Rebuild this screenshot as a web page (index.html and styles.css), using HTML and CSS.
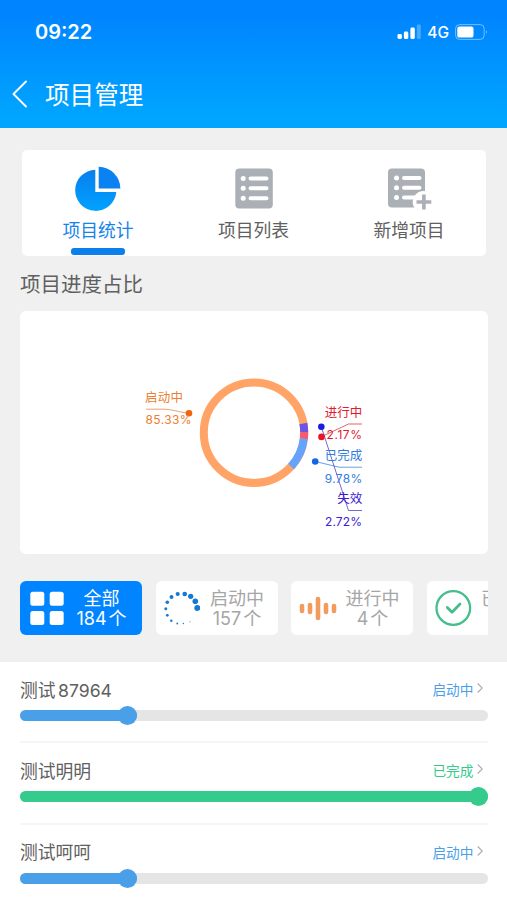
FILE: index.html
```html
<!DOCTYPE html>
<html lang="zh-CN">
<head>
<meta charset="utf-8">
<title>项目管理</title>
<link rel="stylesheet" href="styles.css">
</head>
<body>
<header class="header">
  <div class="status">
    <span class="time">09:22</span>
    <div class="indicators">
      <svg class="signal" width="24" height="16" viewBox="0 0 24 16" fill="#fff"><rect x="0.500" y="10" width="4.4" height="5" rx="1.4"/><rect x="6.900" y="7.5" width="4.4" height="7.5" rx="1.4"/><rect x="13.400" y="3.5" width="4.4" height="11.5" rx="1.4"/><rect x="19.800" y="0.5" width="4" height="14.5" rx="1.4" opacity=".28"/></svg>
      <span class="network">4G</span>
      <svg class="battery" width="34" height="16" viewBox="0 0 34 16"><rect x=".6" y=".6" width="28.6" height="14.8" rx="4" fill="none" stroke="#fff" stroke-opacity=".45"/><rect x="2.3" y="2.4" width="16.2" height="11.2" rx="2.2" fill="#fff"/><path d="M31 5.6q1.8 2.4 0 4.8z" fill="#fff" opacity=".5"/></svg>
    </div>
  </div>
  <div class="navbar">
    <svg width="16" height="28" viewBox="0 0 16 28" fill="none" stroke="#fff" stroke-width="1.9" stroke-linecap="round" stroke-linejoin="round"><path d="M14 1.5 1.5 14 14 26.5"/></svg>
    <h1 class="title">项目管理</h1>
  </div>
</header>

<nav class="tabs">
  <a class="tab active">
    <svg width="48" height="48" viewBox="0 0 48 48"><defs><linearGradient id="pie" x1="0" y1="0" x2="0" y2="1"><stop offset="0" stop-color="#087fee"/><stop offset="1" stop-color="#00a2ff"/></linearGradient></defs><path d="M21.3 3.7A20.6 20.6 0 1 0 42.300 26H21.3z" fill="url(#pie)"/><path d="M24.700.7A22 22 0 0 1 46.400 22.400H24.700z" fill="#0b82f2"/></svg>
    <span>项目统计</span>
    <i class="marker"></i>
  </a>
  <a class="tab">
    <svg width="48" height="48" viewBox="0 0 48 48"><rect x="5.3" y="2.5" width="37.5" height="40" rx="4" fill="#aab0b6"/><g fill="#fff"><circle cx="13.2" cy="12.5" r="2.5"/><circle cx="13.2" cy="22.2" r="2.5"/><circle cx="13.2" cy="32.2" r="2.5"/></g><path d="M20.5 12.5h16M20.5 22.2h16M20.5 32.2h16" stroke="#fff" stroke-width="4" stroke-linecap="round"/></svg>
    <span>项目列表</span>
  </a>
  <a class="tab">
    <svg width="48" height="48" viewBox="0 0 48 48"><rect x="3" y="2.5" width="37" height="39" rx="4" fill="#aab0b6"/><g fill="#fff"><circle cx="11.5" cy="12" r="2.5"/><circle cx="11.5" cy="21.8" r="2.5"/><circle cx="11.5" cy="31.6" r="2.5"/></g><path d="M19 12h15.500M19 21.800h15.500M19 31.600h12" stroke="#fff" stroke-width="4" stroke-linecap="round"/><circle cx="38.700" cy="36" r="11" fill="#fff"/><path d="M31.500 36h14.800M38.900 28.500v15" stroke="#aab0b6" stroke-width="3.600"/></svg>
    <span>新增项目</span>
  </a>
</nav>

<h2 class="heading">项目进度占比</h2>

<section class="chart">
  <svg width="468" height="243" viewBox="20 311 468 243">
    <g fill="none" stroke-width="8">
      <circle cx="254" cy="432.700" r="50.200" stroke="#ffa366"/>
      <g transform="rotate(-10.500 254 432.700)">
        <circle cx="254" cy="432.700" r="50.200" pathLength="100" stroke="#6c55e6" stroke-dasharray="2.720 97.280"/>
        <circle cx="254" cy="432.700" r="50.200" pathLength="100" stroke="#f45a72" stroke-dasharray="2.170 97.830" stroke-dashoffset="-2.720"/>
        <circle cx="254" cy="432.700" r="50.200" pathLength="100" stroke="#66a3ff" stroke-dasharray="9.780 90.220" stroke-dashoffset="-4.890"/>
      </g>
    </g>
    <g fill="none" stroke-width=".9">
      <path d="M146 409.200h17c10 0 15 3 26 4" stroke="#e8945c"/>
      <path d="M321.500 436.700 348.500 424H362" stroke="#d9545c"/>
      <path d="M315.300 461.500 339 467.200H362" stroke="#5b93e0"/>
      <path d="M321.300 426.800 348.500 510.500H362" stroke="#6557c9"/>
    </g>
    <circle cx="189" cy="413.200" r="3.300" fill="#f2640c"/>
    <circle cx="321.300" cy="426.800" r="3.300" fill="#1c1ce0"/>
    <circle cx="321.500" cy="436.900" r="3.300" fill="#ec1324"/>
    <circle cx="315.200" cy="461.500" r="3.300" fill="#1268e4"/>
    <g class="label" fill="#ed7d31">
      <text x="145" y="401.500" textLength="38">启动中</text>
      <text class="value" x="145.500" y="424.300" textLength="46">85.33%</text>
    </g>
    <g class="label" fill="#e01c30">
      <text x="324.700" y="416.500" textLength="37.500">进行中</text>
      <text class="value" x="326.500" y="439.200" textLength="35.500">2.17%</text>
    </g>
    <g class="label" fill="#2f7de0">
      <text x="324.700" y="460" textLength="37.500">已完成</text>
      <text class="value" x="324.700" y="482.500" textLength="37.500">9.78%</text>
    </g>
    <g class="label" fill="#3a20cf">
      <text x="337.200" y="503.300" textLength="25">失效</text>
      <text class="value" x="325" y="525.800" textLength="37">2.72%</text>
    </g>
  </svg>
</section>

<div class="filters">
  <div class="chip selected">
    <svg width="36" height="36" viewBox="0 0 36 36" fill="#fff"><rect x="2.300" y="1.700" width="14" height="14" rx="2.500"/><rect x="21.700" y="1.700" width="14" height="14" rx="2.500"/><rect x="2.300" y="21" width="14" height="14" rx="2.500"/><rect x="21.700" y="21" width="14" height="14" rx="2.500"/></svg>
    <div class="chip-text"><span>全部</span><span>184<b>个</b></span></div>
  </div>
  <div class="chip">
    <svg width="36" height="36" viewBox="164 590 36 36" fill="#1478d4"><circle cx="197.300" cy="608" r="3"/><circle cx="195.300" cy="601.300" r="2.800"/><circle cx="190.700" cy="596.300" r="2.600"/><circle cx="184.700" cy="594" r="2.300"/><circle cx="177.700" cy="594" r="2.100"/><circle cx="171.500" cy="597" r="2"/><circle cx="167.300" cy="602.300" r="1.800"/><circle cx="165.800" cy="608.700" r="1.500"/><circle cx="167.300" cy="615.300" r="1.400"/><circle cx="171.300" cy="620.700" r="1.200"/><circle cx="177.300" cy="623.500" r=".9"/><circle cx="183.300" cy="623.500" r=".7"/><circle cx="190" cy="621.700" r=".5"/></svg>
    <div class="chip-text"><span>启动中</span><span>157<b>个</b></span></div>
  </div>
  <div class="chip">
    <svg width="38" height="36" viewBox="299 590 38 36" stroke="#f29b5e" stroke-width="4.600" stroke-linecap="round"><path d="M302 606v5M310 605v7M318 599v19M326 605v7M334 606v5"/></svg>
    <div class="chip-text"><span>进行中</span><span>4<b>个</b></span></div>
  </div>
  <div class="chip">
    <svg width="38" height="38" viewBox="0.700 0 38 38" fill="none" stroke="#45bd8d"><circle cx="19" cy="19" r="16.800" stroke-width="2.300"/><path d="m13 18.500 4.700 4.700 8-8.200" stroke-width="2.800" stroke-linecap="round" stroke-linejoin="round"/></svg>
    <div class="chip-text"><span>已完成</span><span>&nbsp;</span></div>
  </div>
</div>

<main class="list">
  <article class="item">
    <div class="row"><span class="name">测试<b>87964</b></span><span class="state">启动中<svg width="6" height="12" viewBox="0 0 6 12"><path d="M.7 1.500 5.300 6 .7 10.500"/></svg></span></div>
    <div class="track"><div class="fill" style="width:25%"></div></div>
  </article>
  <article class="item done">
    <div class="row"><span class="name">测试明明</span><span class="state">已完成<svg width="6" height="12" viewBox="0 0 6 12"><path d="M.7 1.500 5.300 6 .7 10.500"/></svg></span></div>
    <div class="track"><div class="fill" style="width:100%"></div></div>
  </article>
  <article class="item">
    <div class="row"><span class="name">测试呵呵</span><span class="state">启动中<svg width="6" height="12" viewBox="0 0 6 12"><path d="M.7 1.500 5.300 6 .7 10.500"/></svg></span></div>
    <div class="track"><div class="fill" style="width:25%"></div></div>
  </article>
</main>
</body>
</html>
```
FILE: styles.css
```css
* { box-sizing: border-box; }
body {
  margin: 0;
  height: 900px;
  overflow: hidden;
  display: flex;
  flex-direction: column;
  background: #f0f0f0;
  color: #606060;
  font-family: Inter, "Noto Sans CJK SC", sans-serif;
}
h1, h2 { margin: 0; font-weight: 400; }
b { font-weight: 400; }
svg { display: block; flex: none; }

.header {
  height: 128px;
  flex: none;
  background: linear-gradient(#0084ff 10%, #00a5ff 92%);
  color: #fff;
}
.status {
  height: 64px;
  padding: 0 18px 0 35px;
  display: flex;
  align-items: center;
  justify-content: space-between;
}
.time { font-size: 20px; font-weight: 600; letter-spacing: 0; }
.indicators { display: flex; align-items: center; }
.network { margin: 1px 6px 0 6px; font-size: 15.5px; font-weight: 500; line-height: 18px; }
.navbar {
  height: 60px;
  padding-left: 12px;
  display: flex;
  align-items: center;
  gap: 17px;
}
.title { padding-top: 1px; font-size: 24.6px; line-height: 36px; }

.tabs {
  height: 106px;
  flex: none;
  margin: 21.500px 21px 0 22px;
  display: grid;
  grid-template-columns: 152px 159px 152px;
  background: #fff;
  border-radius: 5px;
}
.tab {
  display: flex;
  flex-direction: column;
  align-items: center;
  padding-top: 16px;
  font-size: 17.800px;
  line-height: 26px;
}
.tab span { margin-top: 4px; }
.tab.active { color: #1683ea; }
.marker { width: 54px; height: 7px; margin-top: 4px; border-radius: 3px; background: #0d7fec; }

.heading { margin: 14px 20px 0; font-size: 20.500px; line-height: 30px; }
.chart {
  flex: none;
  height: 243px;
  margin: 11px 19px 0 20px;
  background: #fff;
  border-radius: 6px;
}
.label { font-size: 12.500px; }
.value { font-size: 12px; }

.filters {
  flex: none;
  margin: 27.500px 19px 0 20px;
  display: flex;
  gap: 13.500px;
  overflow: hidden;
}
.chip {
  width: 122px;
  height: 54px;
  flex: none;
  display: grid;
  grid-template-columns: 43px 61px;
  align-items: center;
  justify-content: start;
  padding: 0 0 1px 8px;
  background: #fff;
  border-radius: 6px;
  color: #a6a6a6;
}
.chip.selected { background: #0084ff; color: #fff; }
.chip-text {
  display: flex;
  flex-direction: column;
  align-items: center;
  padding-top: 3px;
  font-size: 18px;
  line-height: 20.500px;
  white-space: nowrap;
}
.chip-text b { margin-left: 2px; }

.list {
  flex: 1;
  margin-top: 27px;
  padding: 0 19px 0 20px;
  background: #fff;
}
.item { --tone: #4aa0e8; height: 81.300px; padding-top: 15px; border-bottom: 2px solid #f5f5f5; }
.item.done { --tone: #35cb8d; }
.row { height: 26px; display: flex; align-items: center; justify-content: space-between; }
.name { padding-top: 1px; font-size: 17.800px; line-height: 26px; }
.name b { margin-left: 2.500px; font-size: 17.600px; }
.state {
  display: flex;
  align-items: center;
  gap: 3px;
  padding-right: 5.500px;
  color: var(--tone);
  font-size: 13.700px;
  line-height: 20px;
}
.state svg { margin-top: -4px; fill: none; stroke: #aaa; stroke-width: 1.100; }
.track { height: 11px; margin-top: 7px; border-radius: 6px; background: #e5e5e5; }
.fill {
  height: 11px;
  display: flex;
  align-items: center;
  justify-content: flex-end;
  border-radius: 6px;
  background: var(--tone);
}
.fill::after { content: ""; width: 19px; height: 19px; flex: none; border-radius: 50%; background: var(--tone); }
```
